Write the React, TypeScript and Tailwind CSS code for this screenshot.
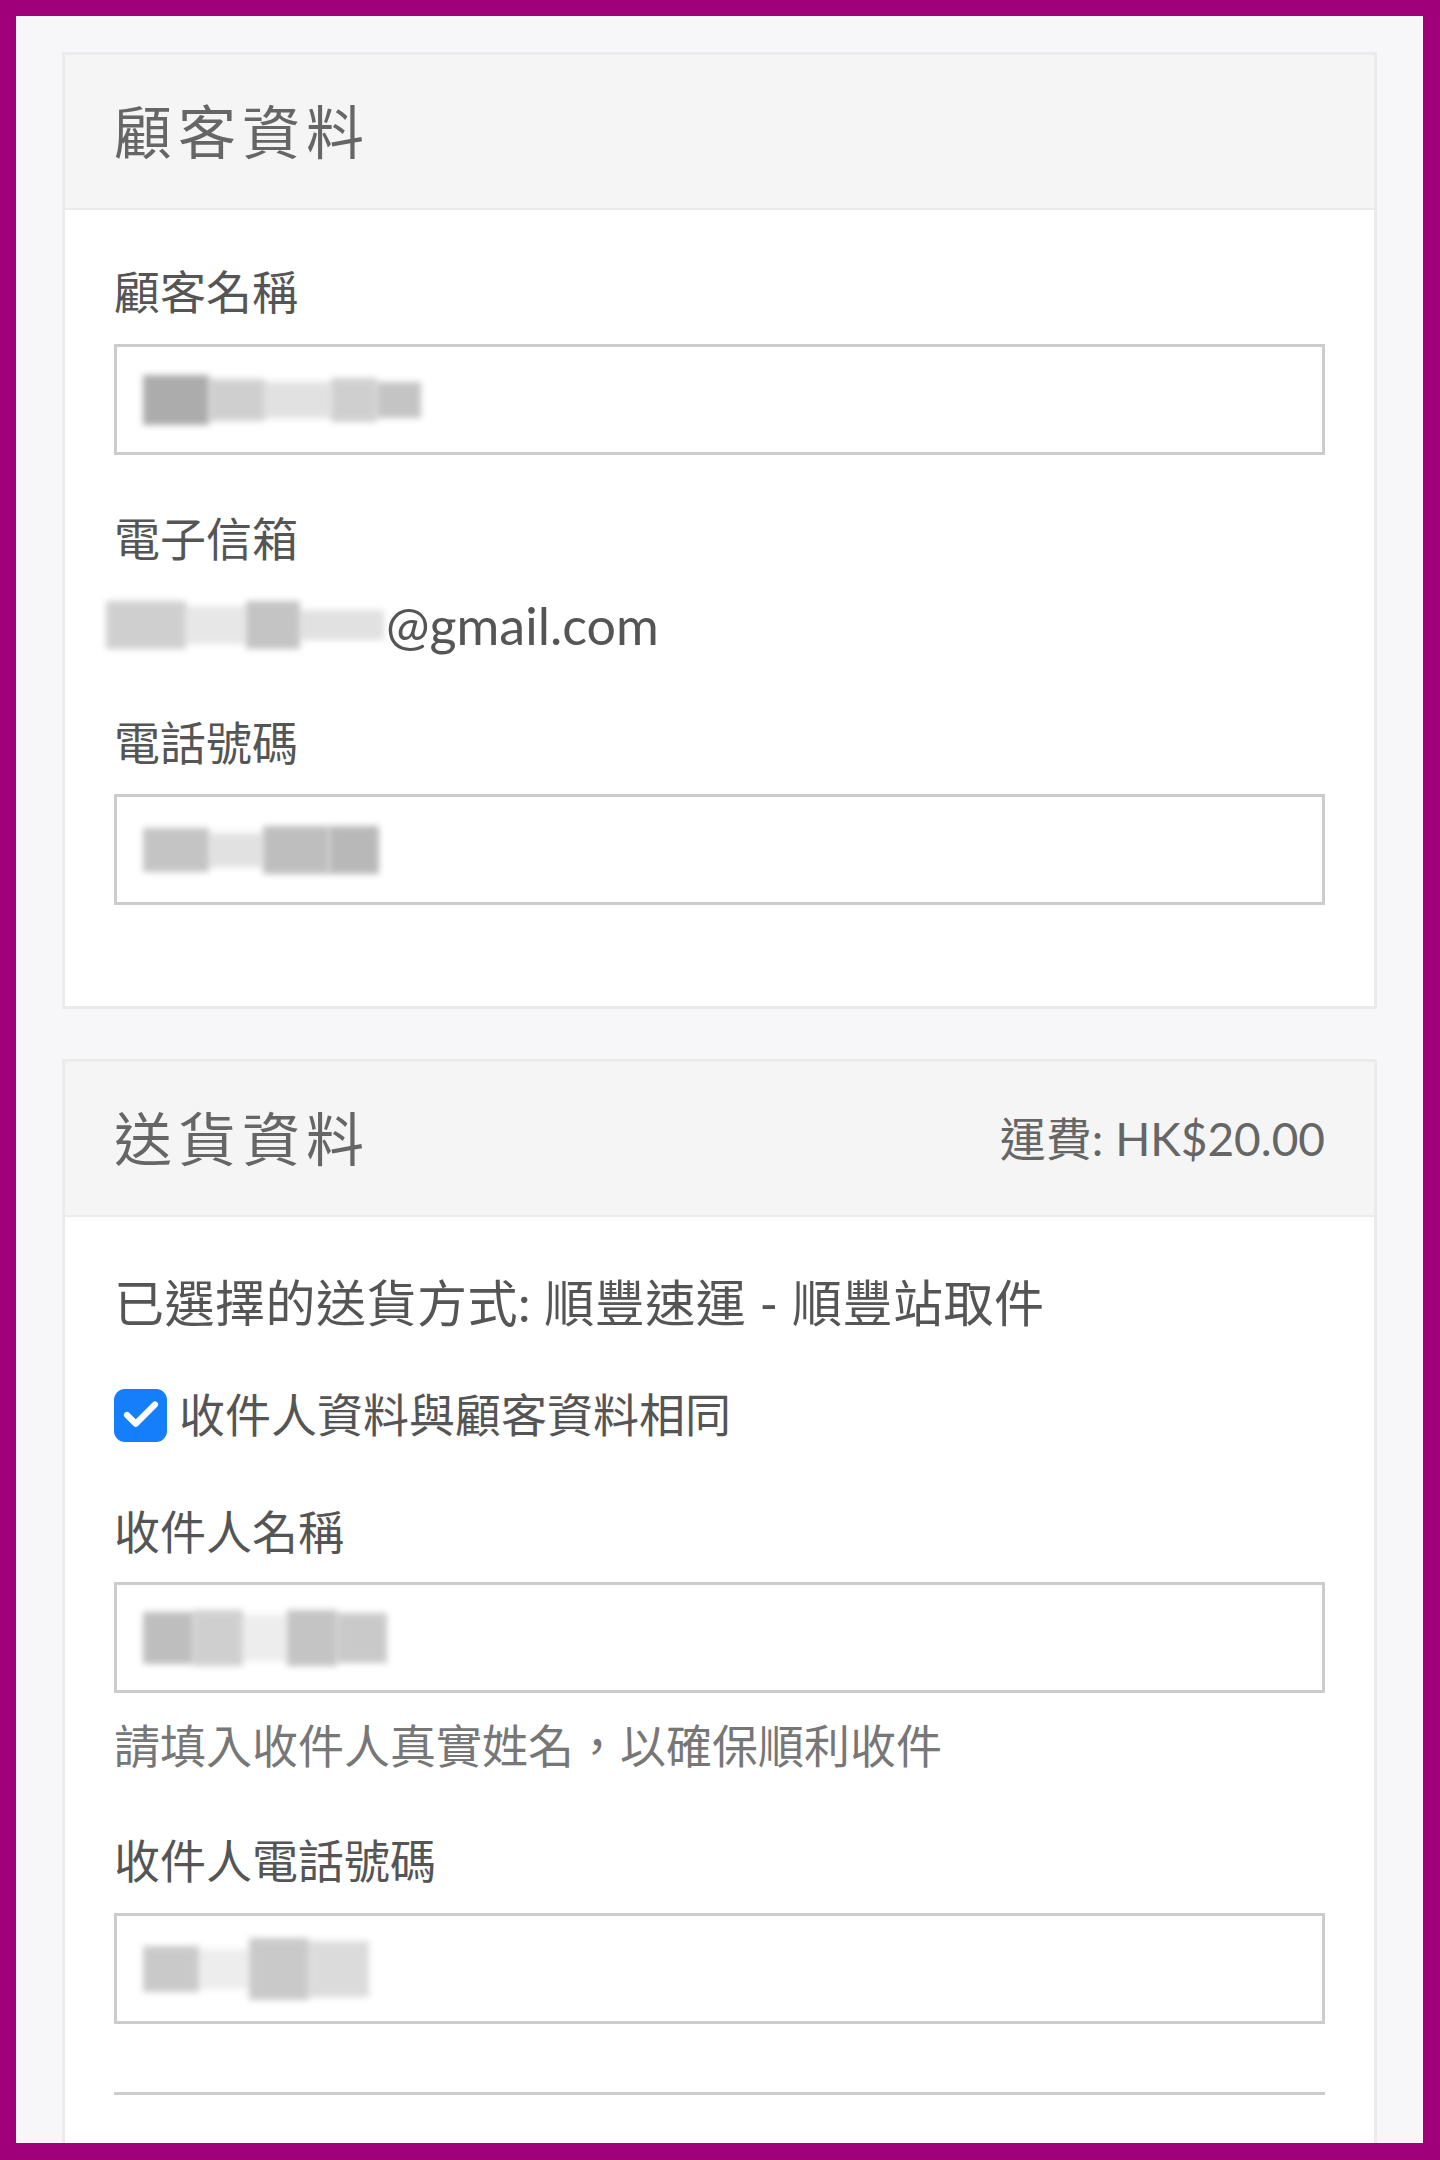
import { Check } from 'lucide-react';

const FONT = 'font-[Lato,"Noto_Sans_CJK_TC",sans-serif]';

// redacted scribble, drawn as blurred grey smudges
function Smudge({ parts }: { parts: { w: number; h: number; o: string }[] }) {
  return (
    <div className="flex items-center">
      {parts.map((p, i) => (
        <div
          key={i}
          className={`blur-[3px] bg-[#8a8a8a] ${p.o}`}
          style={{ width: p.w, height: p.h }}
        />
      ))}
    </div>
  );
}

function Field({ children }: { children?: React.ReactNode }) {
  return (
    <div className="h-[111px] border-[3px] border-[#cccccc] bg-white flex items-center pl-[26px]">
      {children}
    </div>
  );
}

function Label({ text, className = '' }: { text: string; className?: string }) {
  return <div className={`h-[60px] leading-[60px] text-[46px] text-[#555555] ${className}`}>{text}</div>;
}

export default function App() {
  return (
    <div className={`bg-[#a0007a] w-[1440px] h-[2160px] pt-4 pl-4 pr-[17px] pb-[17px] ${FONT}`}>
      <div className="bg-[#f7f7f9] h-full overflow-hidden px-[46px] pt-[36px]">
        {/* customer */}
        <section className="bg-white border-[3px] border-[#ebebeb]">
          <div className="h-[155px] bg-[#f5f5f5] border-b-2 border-[#ebebeb] flex items-center px-[49px]">
            <h2 className="text-[58px] tracking-[6px] text-[#666666]">顧客資料</h2>
          </div>
          <div className="px-[49px] pt-[52px] pb-[101px]">
            <Label text="顧客名稱" />
            <div className="mt-[22px]">
              <Field>
                <Smudge
                  parts={[
                    { w: 66, h: 50, o: 'opacity-70' },
                    { w: 56, h: 42, o: 'opacity-40' },
                    { w: 66, h: 36, o: 'opacity-25' },
                    { w: 46, h: 44, o: 'opacity-40' },
                    { w: 44, h: 36, o: 'opacity-50' },
                  ]}
                />
              </Field>
            </div>
            <Label text="電子信箱" className="mt-[54px]" />
            <div className="mt-[26px] h-[60px] flex items-center -ml-[8px]">
              <Smudge
                parts={[
                  { w: 80, h: 48, o: 'opacity-40' },
                  { w: 60, h: 38, o: 'opacity-20' },
                  { w: 54, h: 48, o: 'opacity-50' },
                  { w: 84, h: 30, o: 'opacity-25' },
                ]}
              />
              <span className="text-[52px] text-[#555555] leading-[60px] ml-[2px]">@gmail.com</span>
            </div>
            <Label text="電話號碼" className="mt-[58px]" />
            <div className="mt-[21px]">
              <Field>
                <Smudge
                  parts={[
                    { w: 66, h: 44, o: 'opacity-50' },
                    { w: 54, h: 34, o: 'opacity-25' },
                    { w: 66, h: 48, o: 'opacity-55' },
                    { w: 50, h: 48, o: 'opacity-60' },
                  ]}
                />
              </Field>
            </div>
          </div>
        </section>

        {/* delivery */}
        <section className="mt-[50px] bg-white border-[3px] border-[#ebebeb] pb-[400px]">
          <div className="h-[155px] bg-[#f5f5f5] border-b-2 border-[#ebebeb] flex items-center justify-between px-[49px]">
            <h2 className="text-[58px] tracking-[6px] text-[#666666]">送貨資料</h2>
            <span className="text-[46px] text-[#666666]">運費: HK$20.00</span>
          </div>
          <div className="px-[49px] pt-[56px]">
            <div className="h-[60px] leading-[60px] text-[50px] tracking-[0.5px] text-[#555555] whitespace-pre">已選擇的送貨方式: 順豐速運 - 順豐站取件</div>
            <label className="mt-[52px] h-[60px] flex items-center gap-[12px]">
              <span className="w-[53px] h-[53px] rounded-[11px] bg-[#147efb] flex items-center justify-center">
                <Check className="w-[42px] h-[42px] text-white" strokeWidth={3.5} />
              </span>
              <span className="text-[46px] text-[#555555] leading-[60px]">收件人資料與顧客資料相同</span>
            </label>
            <Label text="收件人名稱" className="mt-[57px]" />
            <div className="mt-[20px]">
              <Field>
                <Smudge
                  parts={[
                    { w: 50, h: 52, o: 'opacity-55' },
                    { w: 50, h: 56, o: 'opacity-40' },
                    { w: 44, h: 46, o: 'opacity-15' },
                    { w: 50, h: 56, o: 'opacity-50' },
                    { w: 50, h: 50, o: 'opacity-45' },
                  ]}
                />
              </Field>
            </div>
            <div className="mt-[23px] h-[60px] leading-[60px] text-[46px] text-[#777777]">請填入收件人真實姓名，以確保順利收件</div>
            <Label text="收件人電話號碼" className="mt-[55px]" />
            <div className="mt-[22px]">
              <Field>
                <Smudge
                  parts={[
                    { w: 56, h: 46, o: 'opacity-45' },
                    { w: 50, h: 40, o: 'opacity-15' },
                    { w: 60, h: 62, o: 'opacity-45' },
                    { w: 60, h: 56, o: 'opacity-30' },
                  ]}
                />
              </Field>
            </div>
            <div className="mt-[68px] h-[3px] bg-[#cccccc]" />
          </div>
        </section>
      </div>
    </div>
  );
}
